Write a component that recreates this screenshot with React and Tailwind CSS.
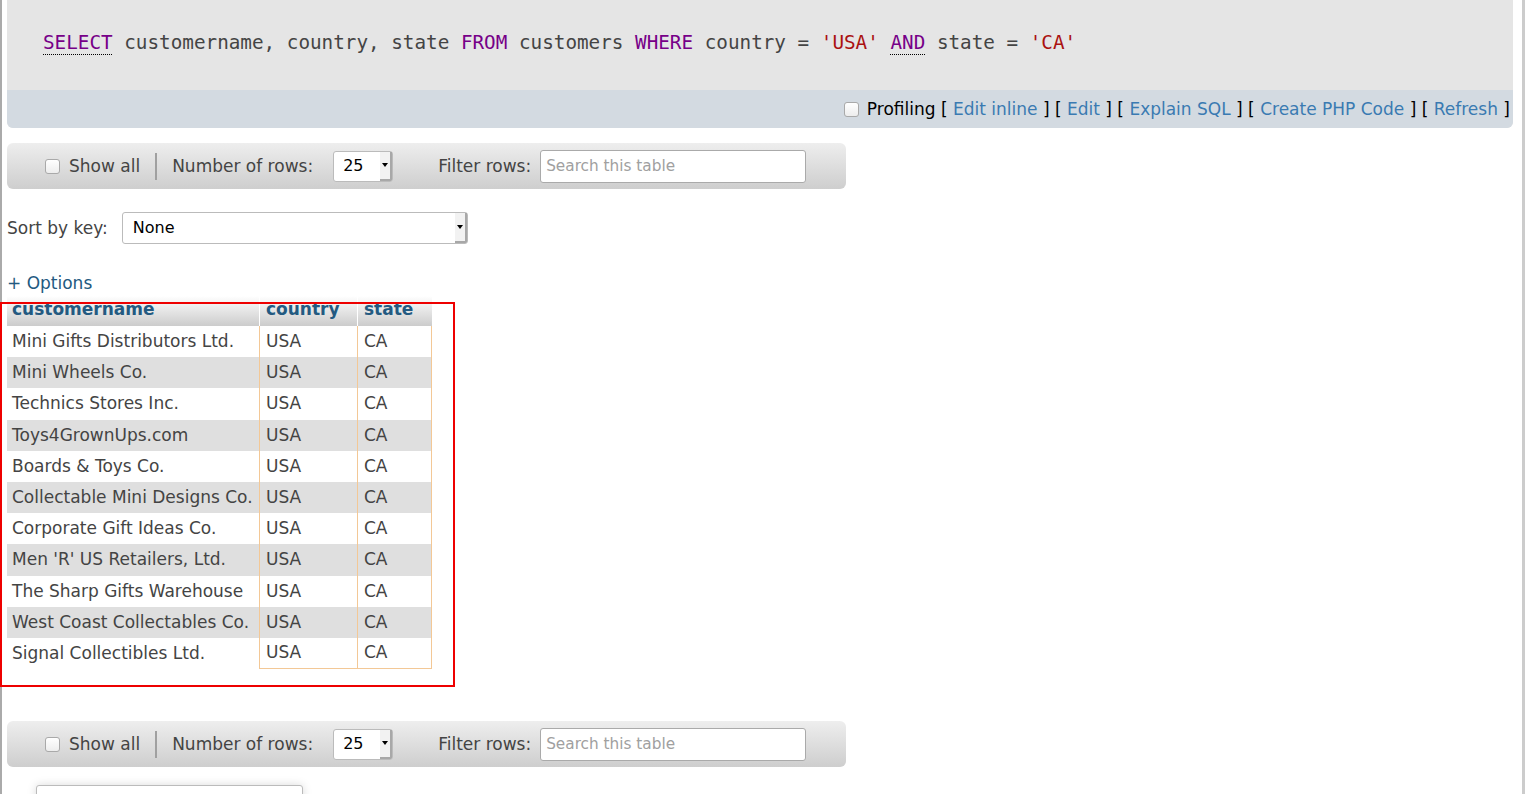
const rows = [
  "Mini Gifts Distributors Ltd.",
  "Mini Wheels Co.",
  "Technics Stores Inc.",
  "Toys4GrownUps.com",
  "Boards & Toys Co.",
  "Collectable Mini Designs Co.",
  "Corporate Gift Ideas Co.",
  "Men 'R' US Retailers, Ltd.",
  "The Sharp Gifts Warehouse",
  "West Coast Collectables Co.",
  "Signal Collectibles Ltd.",
];

function Checkbox() {
  return (
    <div className="w-[15px] h-[15px] shrink-0 rounded-[3px] border border-[#a9a9a9] bg-linear-to-b from-white to-[#ededed]" />
  );
}

function SelectArrow() {
  return (
    <div className="h-full w-[12px] flex items-center justify-center bg-[#f2f2f2] border-r-2 border-b-2 border-[#a8a8a8] rounded-br-[2px]">
      <div className="w-0 h-0 border-l-[3px] border-r-[3px] border-t-[4px] border-l-transparent border-r-transparent border-t-black" />
    </div>
  );
}

function NavBar() {
  return (
    <div className="w-[839px] h-[46px] rounded-[6px] bg-linear-to-b from-[#eeeeee] to-[#cecece] flex items-center pl-[38px]">
      <Checkbox />
      <span className="ml-[9px]">Show all</span>
      <div className="ml-[15px] w-[2px] h-[27px] bg-[#a0a0a0]" />
      <span className="ml-[15px]">Number of rows:</span>
      <div className="ml-[20px] w-[60px] h-[31px] bg-white border border-[#bbbbbb] rounded-[3px] flex items-center justify-between pl-[9px] text-black text-[16px]">
        <span>25</span>
        <SelectArrow />
      </div>
      <span className="ml-[45px]">Filter rows:</span>
      <div className="ml-[9px] w-[266px] h-[33px] bg-white border border-[#aaaaaa] rounded-[3px] flex items-center pl-[5px] text-[#a0a0a0] text-[15.3px]">
        Search this table
      </div>
    </div>
  );
}

export default function App() {
  const kw = "text-[#770088]";
  const str = "text-[#aa1111]";
  const ul = "underline decoration-dotted decoration-black decoration-1 underline-offset-[5px]";
  return (
    <div className="relative w-[1526px] h-[794px] overflow-hidden bg-white font-['DejaVu_Sans',sans-serif] text-[17px] leading-[20px] text-[#444]">
      <div className="w-[1525px] h-[794px] border-l-2 border-r-[3px] border-l-[#aaaaaa] border-r-[#cccccc] pl-[5px] pr-[9px]">
        {/* SQL box */}
        <div className="bg-[#e5e5e5] rounded-b-[6px]">
          <div className="h-[90px] pt-[31px] pl-[36px] font-['DejaVu_Sans_Mono',monospace] text-[19.3px] leading-[24px] text-[#444] whitespace-pre">
            <span className={`${kw} ${ul}`}>SELECT</span>
            <span> customername, country, state </span>
            <span className={kw}>FROM</span>
            <span> customers </span>
            <span className={kw}>WHERE</span>
            <span> country = </span>
            <span className={str}>'USA'</span>
            <span> </span>
            <span className={`${kw} ${ul}`}>AND</span>
            <span> state = </span>
            <span className={str}>'CA'</span>
          </div>
          <div className="h-[38px] bg-[#d3dae1] rounded-b-[6px] flex items-center justify-end pr-[3px] text-black whitespace-pre">
            <Checkbox />
            <span className="ml-[8px]">Profiling</span>
            <span> [ </span><span className="text-[#3a7ab2]">Edit inline</span><span> ] [ </span>
            <span className="text-[#3a7ab2]">Edit</span><span> ] [ </span>
            <span className="text-[#3a7ab2]">Explain SQL</span><span> ] [ </span>
            <span className="text-[#3a7ab2]">Create PHP Code</span><span> ] [ </span>
            <span className="text-[#3a7ab2]">Refresh</span><span> ]</span>
          </div>
        </div>

        <div className="mt-[15px]">
          <NavBar />
        </div>

        {/* Sort by key */}
        <div className="mt-[23px] flex items-center">
          <span>Sort by key:</span>
          <div className="ml-[14px] w-[346px] h-[32px] bg-white border border-[#bbbbbb] rounded-[3px] flex items-center justify-between pl-[10px] text-black text-[16px]">
            <span>None</span>
            <SelectArrow />
          </div>
        </div>

        {/* Options */}
        <div className="mt-[29px] text-[#235a81]">+ Options</div>

        {/* Table */}
        <div className="mt-[3px] w-[425px]">
          <div className="flex h-[30px] bg-linear-to-b from-white to-[#cccccc] font-bold text-[#235a81] leading-[20px]">
            <div className="w-[252px] pl-[5px] pt-[3px]">customername</div>
            <div className="w-[98px] pl-[6px] pt-[3px] border-l border-white">country</div>
            <div className="w-[75px] pl-[6px] pt-[3px] border-l border-white">state</div>
          </div>
          {rows.map((name, i) => {
            const last = i === rows.length - 1;
            return (
              <div
                key={name}
                className={`flex h-[31.2px] items-center ${i % 2 === 1 ? "bg-[#dfdfdf]" : "bg-white"}`}
              >
                <div className="w-[252px] pl-[5px] pb-[1px] whitespace-nowrap">{name}</div>
                <div className={`w-[98px] h-full flex items-center pl-[6px] pb-[1px] border-l border-[#f3c896] ${last ? "border-b" : ""}`}>USA</div>
                <div className={`w-[75px] h-full flex items-center pl-[6px] pb-[1px] border-l border-r border-[#f3c896] ${last ? "border-b" : ""}`}>CA</div>
              </div>
            );
          })}
        </div>

        <div className="mt-[52px]">
          <NavBar />
        </div>

        {/* bottom fieldset */}
        <div className="mt-[18px] ml-[29px] w-[267px] h-[40px] bg-white border border-[#bbbbbb] rounded-t-[3px] shadow-[0_0_10px_rgba(0,0,0,0.15)]" />
      </div>

      {/* red annotation box */}
      <div className="absolute left-0 top-[302px] w-[455px] h-[385px] border-2 border-[#ee0000] pointer-events-none" />
    </div>
  );
}
